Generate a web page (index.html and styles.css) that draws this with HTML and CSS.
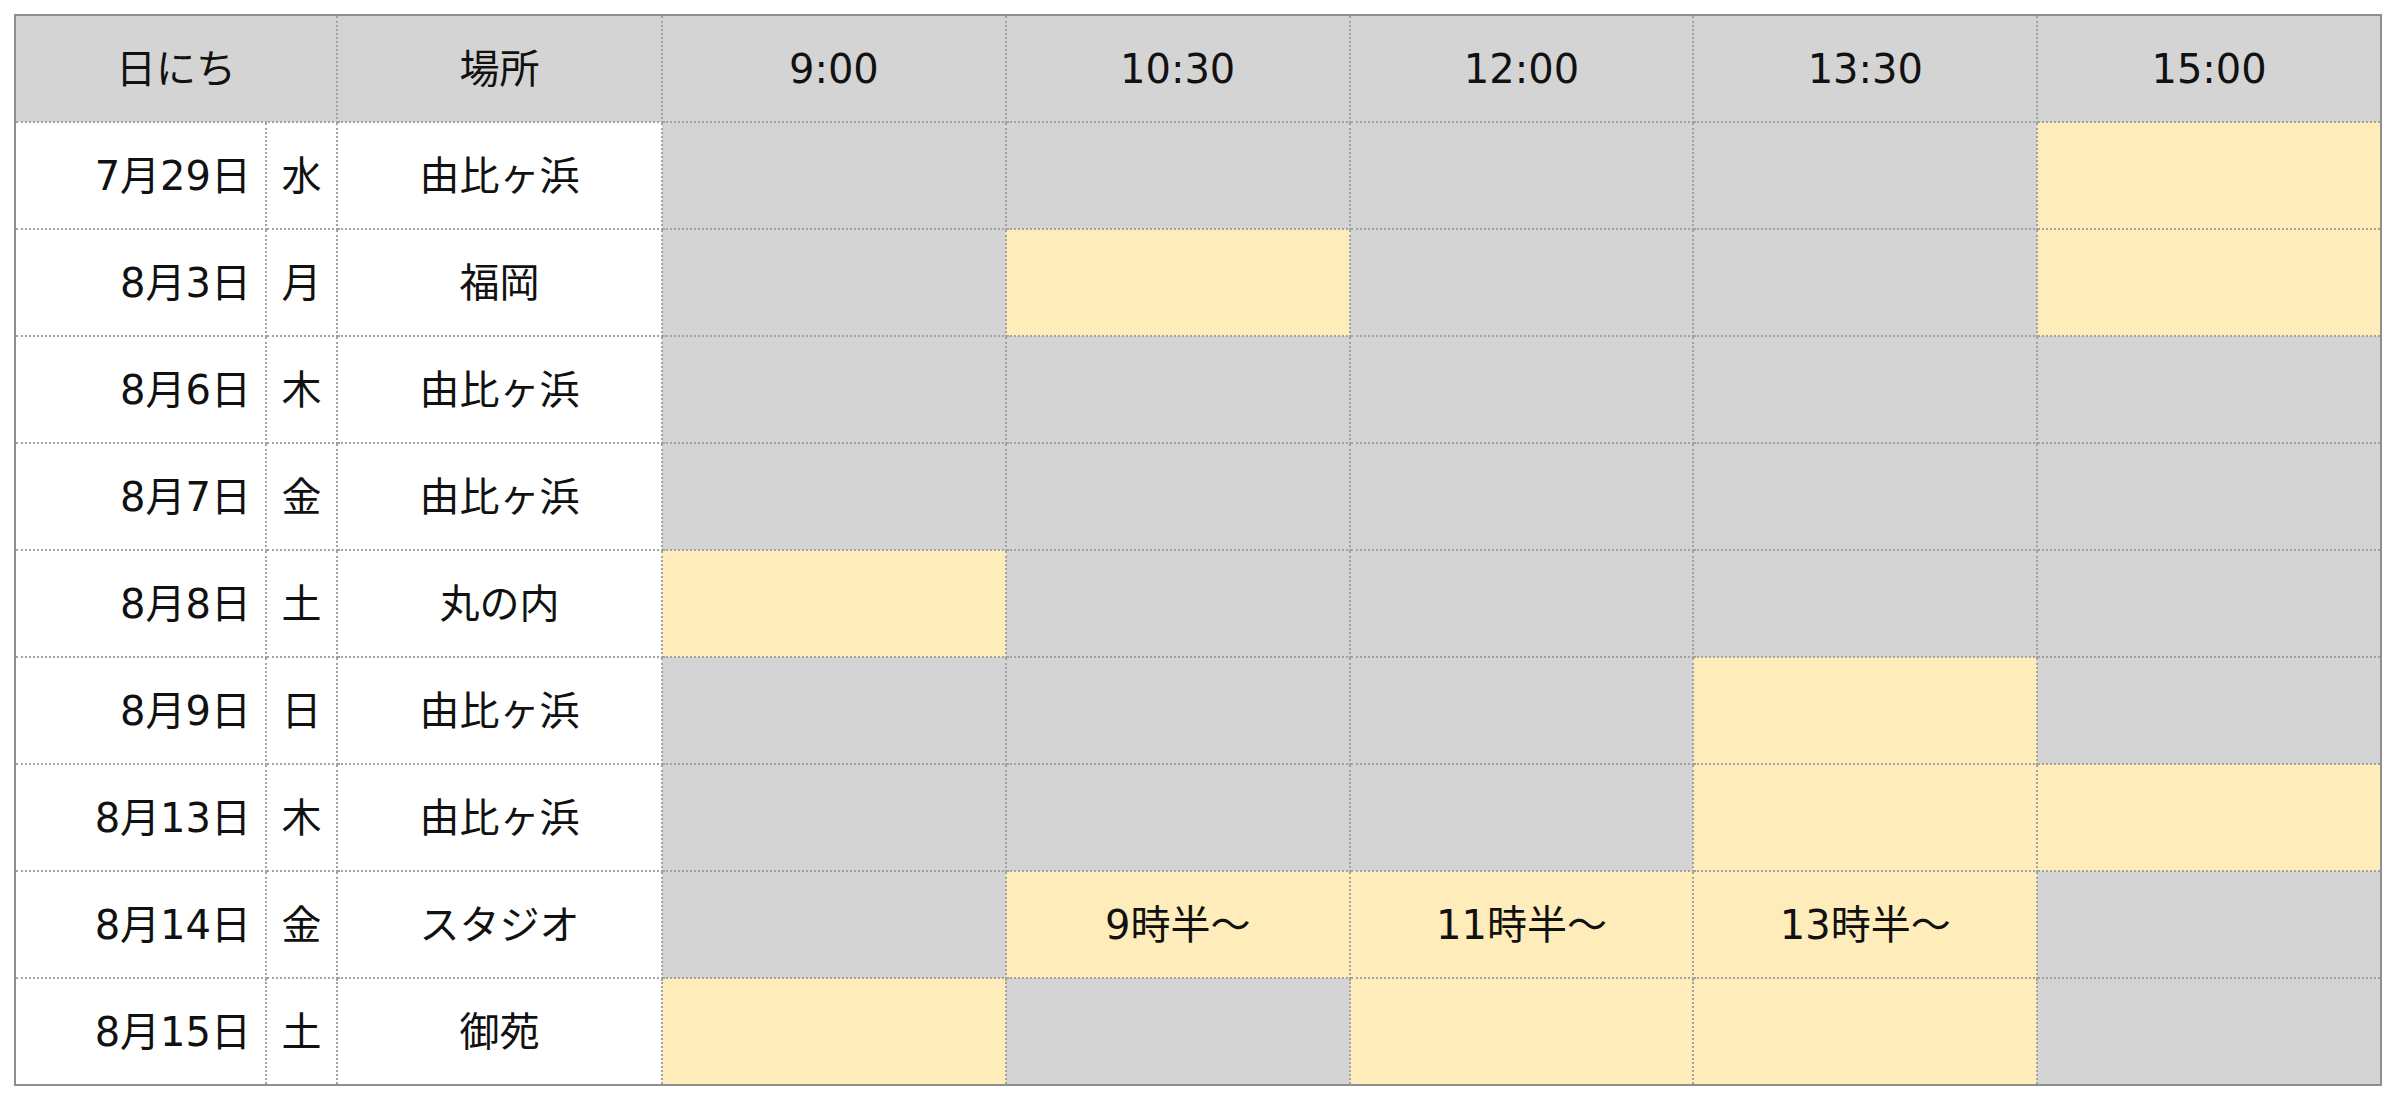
FILE: index.html
```html
<!DOCTYPE html>
<html lang="ja">
<head>
<meta charset="utf-8">
<title>スケジュール</title>
<link rel="stylesheet" href="styles.css">
</head>
<body>
<div class="page">
<table class="schedule">
  <colgroup>
    <col class="c-date">
    <col class="c-dow">
    <col class="c-place">
    <col class="c-time">
    <col class="c-time">
    <col class="c-time">
    <col class="c-time">
    <col class="c-time">
  </colgroup>
  <thead>
    <tr>
      <th colspan="2">日にち</th>
      <th>場所</th>
      <th>9:00</th>
      <th>10:30</th>
      <th>12:00</th>
      <th>13:30</th>
      <th>15:00</th>
    </tr>
  </thead>
  <tbody>
    <tr>
      <td class="date">7月29日</td><td class="dow">水</td><td class="place">由比ヶ浜</td>
      <td class="no"></td><td class="no"></td><td class="no"></td><td class="no"></td><td class="ok"></td>
    </tr>
    <tr>
      <td class="date">8月3日</td><td class="dow">月</td><td class="place">福岡</td>
      <td class="no"></td><td class="ok"></td><td class="no"></td><td class="no"></td><td class="ok"></td>
    </tr>
    <tr>
      <td class="date">8月6日</td><td class="dow">木</td><td class="place">由比ヶ浜</td>
      <td class="no"></td><td class="no"></td><td class="no"></td><td class="no"></td><td class="no"></td>
    </tr>
    <tr>
      <td class="date">8月7日</td><td class="dow">金</td><td class="place">由比ヶ浜</td>
      <td class="no"></td><td class="no"></td><td class="no"></td><td class="no"></td><td class="no"></td>
    </tr>
    <tr>
      <td class="date">8月8日</td><td class="dow">土</td><td class="place">丸の内</td>
      <td class="ok"></td><td class="no"></td><td class="no"></td><td class="no"></td><td class="no"></td>
    </tr>
    <tr>
      <td class="date">8月9日</td><td class="dow">日</td><td class="place">由比ヶ浜</td>
      <td class="no"></td><td class="no"></td><td class="no"></td><td class="ok"></td><td class="no"></td>
    </tr>
    <tr>
      <td class="date">8月13日</td><td class="dow">木</td><td class="place">由比ヶ浜</td>
      <td class="no"></td><td class="no"></td><td class="no"></td><td class="ok"></td><td class="ok"></td>
    </tr>
    <tr>
      <td class="date">8月14日</td><td class="dow">金</td><td class="place">スタジオ</td>
      <td class="no"></td><td class="ok">9時半〜</td><td class="ok">11時半〜</td><td class="ok">13時半〜</td><td class="no"></td>
    </tr>
    <tr>
      <td class="date">8月15日</td><td class="dow">土</td><td class="place">御苑</td>
      <td class="ok"></td><td class="no"></td><td class="ok"></td><td class="ok"></td><td class="no"></td>
    </tr>
  </tbody>
</table>
</div>
</body>
</html>
```
FILE: styles.css
```css
html, body {
  margin: 0;
  padding: 0;
  background: #ffffff;
}

.page {
  padding: 14px;
}

.schedule {
  width: 2368px;
  table-layout: fixed;
  border-collapse: collapse;
  border: 2px solid #8e8e8e;
  font-family: "DejaVu Sans", "Noto Sans CJK JP", sans-serif;
  font-size: 40px;
  font-weight: 400;
  color: #111111;
}

.c-date { width: 251px; }
.c-dow { width: 71px; }
.c-place { width: 325px; }

.schedule th,
.schedule td {
  height: 105px;
  padding: 0;
  border: 2px dotted #a2a2a2;
  text-align: center;
  vertical-align: middle;
  line-height: 1;
}

.schedule th {
  background: #d4d4d4;
  font-weight: 400;
}

.schedule td.date {
  text-align: right;
  padding-right: 14px;
  background: #ffffff;
}

.schedule td.dow,
.schedule td.place {
  background: #ffffff;
}

.schedule td.no {
  background: #d4d4d4;
}

.schedule td.ok {
  background: #feecba;
}
```
